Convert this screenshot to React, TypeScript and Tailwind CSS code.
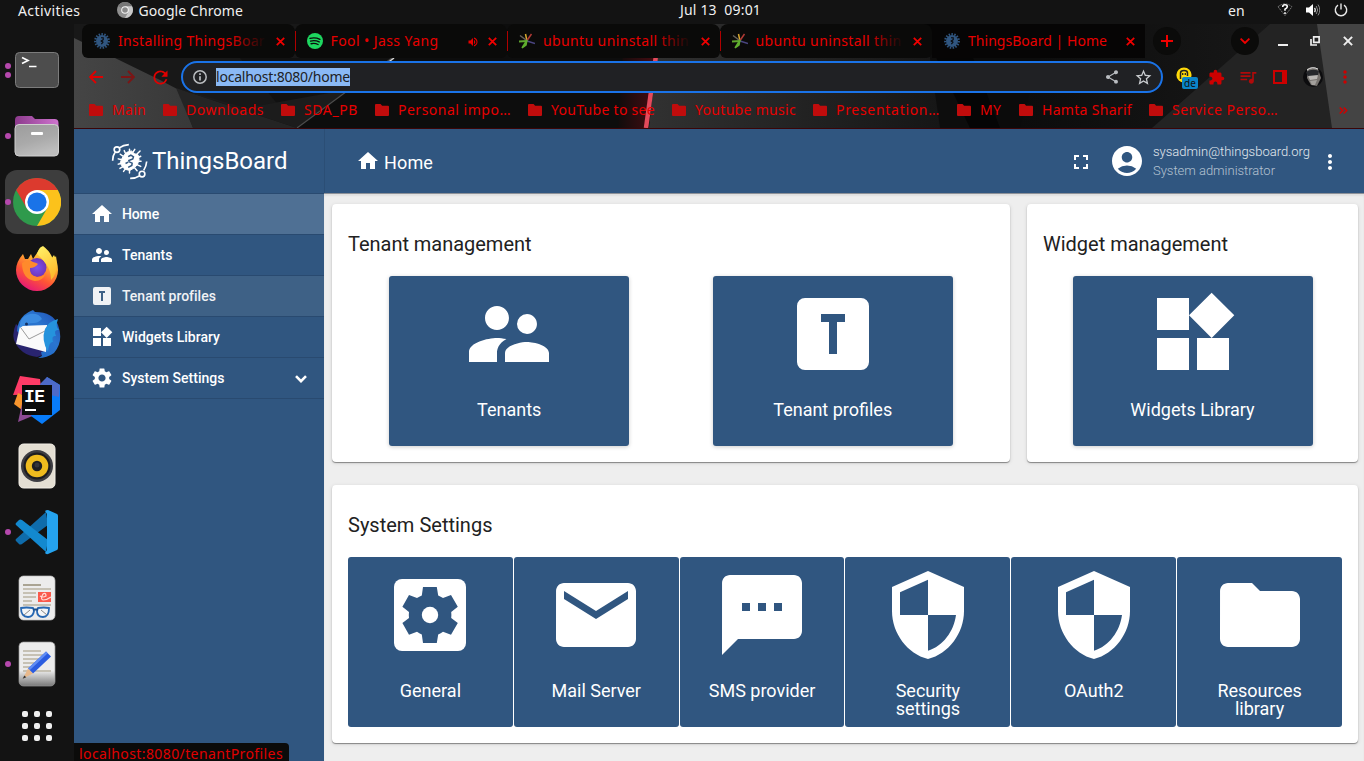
import React, { useLayoutEffect, useRef } from "react";
import {
  MdAccountCircle,
  MdExtension,
  MdFullscreen,
  MdFolder,
  MdHome,
  MdMail,
  MdMoreVert,
  MdQueueMusic,
  MdRefresh,
  MdSecurity,
  MdSettings,
  MdShare,
  MdStarOutline,
  MdSupervisorAccount,
  MdTextsms,
  MdVolumeUp,
  MdWidgets,
} from "react-icons/md";

const PRIMARY = "#305680";

/* Single line of text, tracked so that it fills the given width. */
function FitText({ text, width, className = "" }: { text: string; width: number; className?: string }) {
  const ref = useRef<HTMLSpanElement>(null);
  useLayoutEffect(() => {
    const el = ref.current;
    if (!el) return;
    el.style.letterSpacing = "0px";
    const natural = el.getBoundingClientRect().width;
    el.style.letterSpacing = `${(width - natural) / text.length}px`;
  }, [text, width]);
  return (
    <span ref={ref} className={`inline-block shrink-0 whitespace-pre ${className}`}>
      {text}
    </span>
  );
}

/* ---------- icons ---------- */

const TBoxIcon = ({ className }: { className?: string }) => (
  <svg viewBox="0 0 24 24" className={className} fill="currentColor">
    <path d="M9 7v2h2v8h2V9h2V7H9M5 3h14a2 2 0 0 1 2 2v14a2 2 0 0 1-2 2H5a2 2 0 0 1-2-2V5a2 2 0 0 1 2-2z" />
  </svg>
);

const GeneralIcon = ({ className }: { className?: string }) => (
  <svg viewBox="0 0 24 24" className={className} fill="currentColor">
    <rect x="3" y="3" width="18" height="18" rx="2" />
    <path
      fill={PRIMARY}
      d="M10.25 5h3.45l.35 2.1q.65.25 1.2.65l2-.75 1.7 2.95-1.65 1.3q.1.75 0 1.5L18.95 14l-1.7 2.95-2-.75q-.55.4-1.2.65l-.35 2.15h-3.45l-.3-2.15q-.65-.25-1.2-.65l-2 .75L5.1 14l1.65-1.25q-.1-.75 0-1.5L5.1 9.95 6.75 7l2 .75q.55-.4 1.2-.65z"
    />
    <circle cx="12" cy="12" r="2.05" />
  </svg>
);

const BoardLogo = () => (
  <svg viewBox="112 52 112 112" className="h-[37px] w-[37px] shrink-0" fill="none" stroke="white">
    <path strokeWidth="5" d="M117 106q0-16 7-25M137 67q12-9 29-10M220 108q-1 14-9 27M199 151q-12 8-29 8" />
    <circle cx="130" cy="72" r="8.5" strokeWidth="5" />
    <circle cx="206" cy="146" r="8.5" strokeWidth="5" />
    <g strokeWidth="4.5" strokeLinecap="round">
      <path d="M168 71v8M152 75l4 9M140 86l7 5M134 100l8 2M134 116l9-2M139 129l8-5M150 138l5-7M168 134v9M184 128l7 8M192 118l10 5M195 107h8M194 96l8-4M190 86l10-10M179 79l5-8" />
    </g>
    <path fill="white" strokeWidth="3" strokeLinejoin="round" d="M160 80l14-4 8 8 12 4 3 15-5 14-9 10-14 8-13-3-9-7-7-13 5-13 7-11z" />
    <path stroke={PRIMARY} strokeWidth="4.5" d="M164 93l8-4 8 5-2 6-12 5 1 4 9 4-1 7-11 6M156 114l8-4" />
  </svg>
);

const GearFavicon = () => (
  <svg viewBox="0 0 16 16" className="h-4 w-4 shrink-0">
    <circle cx="8" cy="8" r="6.8" fill="none" stroke="#305680" strokeWidth="2.2" strokeDasharray="1.5 1.34" />
    <circle cx="8" cy="8" r="6" fill="#305680" />
    <path d="M7 4.8h2.2v1.9L7.2 8l1.8 1.2-1.6 2" stroke="#0a0a0a" strokeWidth="1.1" fill="none" />
  </svg>
);

const SpotifyIcon = () => (
  <svg viewBox="0 0 16 16" className="h-4 w-4 shrink-0">
    <circle cx="8" cy="8" r="8" fill="#1ed760" />
    <path d="M3 5.4q5-1.4 10 .9M3.6 8.1q4.4-1.2 8.6.8M4.1 10.7q3.7-.9 7 .8" stroke="#0b0b0b" strokeWidth="1.4" fill="none" strokeLinecap="round" />
  </svg>
);

const BurstIcon = () => (
  <svg viewBox="0 0 16 16" className="h-4 w-4 shrink-0" fill="none" strokeWidth="1.5">
    <path d="M8 8L6.5 1" stroke="#d9a82e" />
    <path d="M8 7.5L12.500 1" stroke="#b03a35" />
    <path d="M8 8l8 2.5" stroke="#4a4580" />
    <path d="M7 7L1 2.5" stroke="#66615a" />
    <path d="M8 8L0 8.5" stroke="#5fa52e" strokeWidth="2" />
    <path d="M8 7l-5 8 4-3z" fill="#6abf33" stroke="#5fae2e" />
  </svg>
);

const CloseX = ({ className = "h-[9px] w-[9px]" }: { className?: string }) => (
  <svg viewBox="0 0 9 9" className={`shrink-0 ${className}`} stroke="currentColor" strokeWidth="1.8" fill="none">
    <path d="M.8.8l7.4 7.4M8.2.8L.8 8.2" />
  </svg>
);

const BookmarkFolder = () => (
  <svg viewBox="0 0 14 12" className="h-3 w-3.5 shrink-0" fill="#c00c0c">
    <path d="M1 0h4.6l1.5 1.700H13a1 1 0 0 1 1 1V11a1 1 0 0 1-1 1H1a1 1 0 0 1-1-1V1a1 1 0 0 1 1-1z" />
  </svg>
);

/* ---------- desktop top bar ---------- */

function TopBar() {
  return (
    <div className="flex h-6 shrink-0 items-start bg-[#131313] text-[14px] leading-[21px] text-[#f0f0f0]">
      <div className="flex w-[680px] pl-[18px]">
        <FitText text="Activities" width={62.5} />
        <svg viewBox="0 0 16 16" className="mt-[2px] mr-[6px] ml-[36px] h-4 w-4">
          <circle cx="8" cy="8" r="8" fill="#8f8f8f" />
          <path d="M8 8L1 4a8 8 0 0 1 14 0z" fill="#777" />
          <path d="M8 4.2h7a8 8 0 0 1-7 11.8l3.400-6z" fill="#c9c9c9" />
          <circle cx="8" cy="8" r="3.8" fill="#f4f4f4" />
          <circle cx="8" cy="8" r="2.8" fill="#8a8a8a" />
        </svg>
        <FitText text="Google Chrome" width={104.5} />
      </div>
      <div className="w-[548px] leading-[20px]">
        <FitText text="Jul 13  09:01" width={81} />
      </div>
      <FitText text="en" width={17} className="leading-[22px]" />
      <svg viewBox="0 0 16 14" className="mt-[3px] ml-[32px] h-[14px] w-4 shrink-0" fill="none">
        <path d="M1 3.800Q8-2 15 3.800L8 12.500z" stroke="#777" strokeDasharray="2 .8" />
        <path d="M5.700 4q0-2.200 2.300-2.200t2.300 2q0 1.200-2.300 2.400v1.600M8 9.200v1.900" stroke="#fff" strokeWidth="1.6" />
      </svg>
      <svg viewBox="0 0 14 14" className="mt-[3px] ml-[13px] h-[14px] w-[14px] shrink-0" fill="none">
        <path d="M0 4.500h3L7 1v12L3 9.500H0z" fill="#fff" />
        <path d="M8.500 4.800q1.600 2.200 0 4.400" stroke="#ddd" strokeWidth="1.3" />
        <path d="M10.200 3q3 4 0 8M12 1.600q3.600 5.400 0 10.800" stroke="#888" />
      </svg>
      <svg viewBox="0 0 14 14" className="mt-[3px] ml-[14px] h-[14px] w-[14px] shrink-0" fill="none" stroke="#e8e8e8" strokeWidth="1.4">
        <path d="M4 2.200a5.700 5.700 0 1 0 6 0M7 .5v6" />
      </svg>
    </div>
  );
}

/* ---------- dock ---------- */

const TerminalApp = () => (
  <svg viewBox="0 0 48 48" className="h-12 w-12">
    <rect x="2.5" y="6.5" width="43" height="35" rx="4" fill="#4d4d4d" stroke="#7c7c7c" />
    <path d="M9 11.500l6 3-6 3" stroke="#fff" strokeWidth="1.7" fill="none" />
    <path d="M16 20.500h7.500" stroke="#fff" strokeWidth="1.5" />
  </svg>
);

const FilesApp = () => (
  <svg viewBox="0 0 48 48" className="h-12 w-12">
    <defs>
      <linearGradient id="files-back" x2="1"><stop stopColor="#8c3a8c" /><stop offset="1" stopColor="#cf74cf" /></linearGradient>
      <linearGradient id="files-front" x2=".4" y2="1"><stop stopColor="#9c9c9c" /><stop offset=".6" stopColor="#aaa" /><stop offset="1" stopColor="#bdbdbd" /></linearGradient>
    </defs>
    <path d="M2 8q0-4 4-4h13l3 3h19.500q4 0 4 4v12H2z" fill="url(#files-back)" />
    <rect x="2" y="12.500" width="43.500" height="31.500" rx="4" fill="url(#files-front)" stroke="#d0d0d0" />
    <rect x="18" y="20" width="12" height="3" rx="1" fill="#fff" />
  </svg>
);

const ChromeApp = () => (
  <svg viewBox="0 0 48 48" className="h-12 w-12">
    <circle cx="24" cy="24" r="24" fill="#2f9a4c" />
    <path d="M3.200 12A24 24 0 0 1 44.800 12H24L13.600 30z" fill="#dc3a2e" />
    <path d="M24 12h20.800A24 24 0 0 1 24 48l10.400-18z" fill="#fcc21b" />
    <circle cx="24" cy="24" r="12" fill="#fff" />
    <circle cx="24" cy="24" r="9.6" fill="#1a73e8" />
  </svg>
);

const FirefoxApp = () => (
  <svg viewBox="0 0 48 48" className="h-12 w-12">
    <defs>
      <linearGradient id="ff-body" x1=".8" y1=".05" x2=".3" y2="1"><stop stopColor="#fff44f" /><stop offset=".35" stopColor="#ffa930" /><stop offset=".65" stopColor="#ff5634" /><stop offset="1" stopColor="#e5157a" /></linearGradient>
      <linearGradient id="ff-tail" x2=".4" y2="1"><stop stopColor="#fff36a" /><stop offset="1" stopColor="#ffbd2e" /></linearGradient>
      <radialGradient id="ff-globe"><stop stopColor="#7a52f0" /><stop offset="1" stopColor="#7136b8" /></radialGradient>
    </defs>
    <path d="M10 10l2 5 3 0 3-5 2 5 8-12q9 6 10 12l3-4q4 8 4 15a21 21 0 0 1-42 0q0-8 7-16z" fill="url(#ff-body)" />
    <circle cx="24" cy="23.500" r="9.500" fill="url(#ff-globe)" />
    <path d="M24 10q2-7 6-8 8 6 10 14l3-4q3 16-5 24 0-10-5-16-3-5-9-10z" fill="url(#ff-tail)" />
    <path d="M9 19q6-5 11-1 4 1 5 2-3 4-8 4-1 7 7 9 6 0 9-4-3 8-11 8-13-2-13-18z" fill="#ff8a2c" />
  </svg>
);

const MailBirdApp = () => (
  <svg viewBox="0 0 48 48" className="h-12 w-12">
    <defs>
      <linearGradient id="tb-bird" x1="0" y1="1" x2="1" y2="0"><stop stopColor="#1b62c4" /><stop offset=".6" stopColor="#2a75cf" /><stop offset="1" stopColor="#1f4bb0" /></linearGradient>
    </defs>
    <path d="M3 14Q-1 22 1 30q6 15 23 17l12-4z" fill="#29246f" />
    <path d="M6 12q5-9 14-12l2 2q18 0 23 13 6 16-4 28-7 5-16 5l4-2-1-4 4-1q-16-6-28-20 0-4 2-9z" fill="url(#tb-bird)" />
    <path d="M7 16l27-1 0 12-1 15L3 34z" fill="#fafafa" />
    <path d="M8 18l8 11 16-8" stroke="#9a9a9a" fill="none" />
    <path d="M7 18q-1-12 10-14 9-1 12 5-4 4-8 4-8 0-14 5z" fill="#3b8be0" />
    <path d="M32 19q4-8 13-10-3 8 1 11-6-1-3 6-5-1-3 6-4-1-5 10-7-12-3-23z" fill="#2593dd" />
    <circle cx="13.500" cy="14" r="1.500" fill="#153060" />
  </svg>
);

const IdeApp = () => (
  <svg viewBox="0 0 48 48" className="h-12 w-12">
    <path d="M7 0l20 3 2 15-29 1z" fill="#fe3b67" />
    <path d="M5 17l-4 11 8 6 3-14z" fill="#f8952d" />
    <path d="M9 28l-4 18 24-10z" fill="#8d4a93" />
    <path d="M34 1l13 8v25l-18 14-11-8z" fill="#087cfa" />
    <path d="M34 1l13 8-1 12-17-4-2-9z" fill="#4d6ac8" />
    <rect x="9" y="9" width="30" height="30" fill="#0b0b0b" />
    <text x="11" y="26" fill="#fff" fontFamily="Liberation Mono, monospace" fontWeight="bold" fontSize="18" textLength="21">IE</text>
    <path d="M12 34h11" stroke="#fff" strokeWidth="2" />
  </svg>
);

const SpeakerApp = () => (
  <svg viewBox="0 0 48 48" className="h-12 w-12">
    <rect x="6" y="2" width="36" height="44" rx="4.500" fill="#e4dfd3" stroke="#f2eee6" />
    <circle cx="24" cy="24" r="16" fill="#3d3d42" />
    <circle cx="24" cy="24" r="13.500" fill="#1d1d20" />
    <circle cx="24" cy="24" r="11.300" fill="#efbb1e" />
    <circle cx="24" cy="24" r="5.200" fill="#1e1e22" />
    <circle cx="24" cy="23" r="2.500" fill="#34343a" />
  </svg>
);

const CodeApp = () => (
  <svg viewBox="0 0 48 48" className="h-12 w-12">
    <path d="M33 4L3 31q-1 1 0 2l3 3q1 1 3 0l26-19z" fill="#0f6cab" />
    <path d="M33 44L3 17q-1-1 0-2l3-3q1-1 3 0l26 20z" fill="#1389cf" />
    <path d="M32 3q1-1 3-1l9 4q1 .5 1 2v32q0 1.500-1 2l-9 4q-2 .5-3-1l2-3V6z" fill="#25a3ef" />
  </svg>
);

const Paper = ({ children }: { children?: React.ReactNode }) => (
  <svg viewBox="0 0 48 48" className="h-12 w-12">
    <defs>
      <linearGradient id="paper-fade" x2="0" y2="1"><stop offset=".65" stopColor="#ececec" /><stop offset="1" stopColor="#787878" /></linearGradient>
    </defs>
    {children}
  </svg>
);

const ReaderApp = () => (
  <Paper>
    <rect x="6" y="2" width="36" height="44" rx="4.500" fill="#ececec" stroke="#bbb" strokeWidth=".7" />
    <path d="M10 11h18" stroke="#aaa493" strokeWidth="2" />
    <path d="M10 15h28M10 19h13M10 23h13M10 27h9M10 31h28" stroke="#c6c1b4" strokeWidth="2" />
    <rect x="25" y="18" width="13" height="10" fill="#fa5a4c" />
    <path d="M27 22q3 2 6 0 0-4-3-2-3 5 0 6 4 0 8-3" stroke="#ffdcd6" strokeWidth="1.2" fill="none" />
    <g fill="#f4f6f8" stroke="#2768b3" strokeWidth="1.800">
      <path d="M8 34q5-1 12 0l1 3q-1 6-6 6-7 0-7-9z" />
      <path d="M25 34q6-1 11 0 0 9-6 9t-6-6z" />
    </g>
    <path d="M11 41l6-5M28 36l6 5" stroke="#888" />
    <path d="M20 35.500h5" stroke="#1d4f8b" strokeWidth="2" />
  </Paper>
);

const EditorApp = () => (
  <Paper>
    <rect x="6" y="2" width="36" height="44" rx="4.500" fill="url(#paper-fade)" stroke="#999" strokeWidth=".7" />
    <path d="M10 11h18M10 15h20M10 19h16M10 23h12M10 27h9M10 31h28" stroke="#c6c1b4" strokeWidth="2" />
    <path d="M33 11.500l5 5-18 17-5-5z" fill="#2a5ce0" />
    <path d="M33 11.500l1.700 1.700-18 17-1.700-1.700z" fill="#5f8df5" />
    <path d="M15 28.500l5 5-10 5z" fill="#e8b98c" />
    <path d="M11.300 35.500l2 1.700-3.600 1.600z" fill="#333" />
  </Paper>
);

const dock: { icon: React.ReactNode; dots: number; active?: boolean }[] = [
  { icon: <TerminalApp />, dots: 2 },
  { icon: <FilesApp />, dots: 1 },
  { icon: <ChromeApp />, dots: 1, active: true },
  { icon: <FirefoxApp />, dots: 0 },
  { icon: <MailBirdApp />, dots: 0 },
  { icon: <IdeApp />, dots: 0 },
  { icon: <SpeakerApp />, dots: 0 },
  { icon: <CodeApp />, dots: 1 },
  { icon: <ReaderApp />, dots: 0 },
  { icon: <EditorApp />, dots: 1 },
];

function Dock() {
  return (
    <div className="flex w-[74px] shrink-0 flex-col bg-[#131313] pt-[13px]">
      {dock.map((d, i) => (
        <div key={i} className="flex h-[66px] shrink-0 items-center pl-[5px]">
          <div className={`flex h-16 w-16 items-center rounded-xl ${d.active ? "bg-[#3d3d3d]" : ""}`}>
            <div className="flex w-2 flex-col items-center gap-[3px] pr-[2px]">
              {Array.from({ length: d.dots }, (_, k) => (
                <span key={k} className="h-[6px] w-[6px] rounded-full bg-[#b548ad]" />
              ))}
            </div>
            {d.icon}
          </div>
        </div>
      ))}
      <div className="flex h-[58px] shrink-0 items-center justify-center">
        <div className="grid grid-cols-3 gap-[6px]">
          {Array.from({ length: 9 }, (_, k) => (
            <span key={k} className="h-[6px] w-[6px] rounded-[2px] bg-[#f0f0f0]" />
          ))}
        </div>
      </div>
    </div>
  );
}

/* ---------- browser chrome ---------- */

function ThemeArt() {
  return (
    <svg viewBox="74 24 1290 104" className="absolute inset-0 h-full w-full" preserveAspectRatio="none">
      <defs>
        <linearGradient id="t-left" x2="1"><stop stopColor="#454545" /><stop offset="1" stopColor="#383838" /></linearGradient>
        <linearGradient id="t-mid" x2="1"><stop stopColor="#313131" /><stop offset=".5" stopColor="#232323" /><stop offset="1" stopColor="#161616" /></linearGradient>
        <linearGradient id="t-glow" x2="1"><stop stopColor="#100c0c" /><stop offset="1" stopColor="#4a0c12" /></linearGradient>
        <linearGradient id="t-right" x2="1"><stop stopColor="#0c0c0c" /><stop offset="1" stopColor="#1c1c1c" /></linearGradient>
      </defs>
      <rect x="74" y="24" width="1290" height="104" fill="#0d0d0d" />
      <path d="M74 24h330l-14 36-93 68H74z" fill="#181818" />
      <path d="M240 58h150l-93 70z" fill="#111" />
      <path d="M74 38l86 42 19 10 14 38H74z" fill="url(#t-left)" />
      <path d="M176 88l121 40H193z" fill="#242424" />
      <path d="M176 88l70 20 100-18 46-32-95 70z" fill="#1c1c1c" />
      <path d="M392 58l-95 70" stroke="#4c4c4c" strokeWidth="1.200" />
      <path d="M394 58l-8 6" stroke="#ddd" strokeWidth="1.500" />
      <path d="M625 24h33l-10 104h-30z" fill="url(#t-glow)" />
      <path d="M660 24h265l15 104H649z" fill="url(#t-mid)" />
      <path d="M657 48l-11 80" stroke="#e44a5c" strokeWidth="4.500" />
      <path d="M925 24h180v104H1000z" fill="#0b0b0b" />
      <path d="M920 24h40l40 104h-30z" fill="#050505" />
      <path d="M1050 24h314v104H1020z" fill="url(#t-right)" />
      <path d="M1270 24h94v104h-212z" fill="#232323" />
      <path d="M1317 24h47v104h-32z" fill="#444" />
    </svg>
  );
}

const tabs = [
  { icon: <GearFavicon />, title: "Installing ThingsBoar", width: 147, fade: true, sep: true },
  { icon: <SpotifyIcon />, title: "Fool • Jass Yang", width: 108, sound: true, sep: true },
  { icon: <BurstIcon />, title: "ubuntu uninstall thin", width: 146, fade: true, sep: true },
  { icon: <BurstIcon />, title: "ubuntu uninstall thin", width: 146, fade: true },
  { icon: <GearFavicon />, title: "ThingsBoard | Home", width: 139, active: true },
];

function TabStrip() {
  return (
    <div className="flex h-[34px] items-center pl-2">
      {tabs.map((t, i) => (
        <div
          key={i}
          className={`flex h-[34px] w-[212.5px] shrink-0 items-center pl-3 ${
            t.active ? "bg-[#060505]" : "rounded-t-lg rounded-b-md bg-[#0a0a09]"
          }`}
        >
          {t.icon}
          <div className="relative mt-[-2px] ml-2 w-[148px] shrink-0 overflow-hidden text-[14px] text-[#e80000]">
            <FitText text={t.title} width={t.width} />
            {t.fade && <span className="absolute inset-y-0 right-0 w-9 bg-linear-to-r from-transparent to-[#0a0a09]" />}
            {t.sound && <MdVolumeUp className="absolute top-[6px] right-0 h-3 w-3" />}
          </div>
          <CloseX className="ml-[9.5px] h-[9px] w-[9px] text-[#f00000]" />
          {t.sep && <span className="relative z-10 ml-[10px] h-5 w-px shrink-0 bg-[#b00000]" />}
        </div>
      ))}
      <span className="ml-[8.5px] flex h-7 w-7 items-center justify-center rounded-full bg-[#0b0b0a]">
        <svg viewBox="0 0 12 12" className="h-3 w-3" stroke="#f00000" strokeWidth="2">
          <path d="M6 0v12M0 6h12" />
        </svg>
      </span>
      <span className="ml-[50px] flex h-7 w-7 items-center justify-center rounded-full bg-[#0b0b0a]">
        <svg viewBox="0 0 10 6" className="h-[6px] w-[10px]" stroke="#f00000" strokeWidth="1.800" fill="none">
          <path d="M.6.6L5 5 9.400.6" />
        </svg>
      </span>
      <span className="mt-[7px] ml-[19px] h-[2px] w-[10px] bg-[#eee]" />
      <svg viewBox="0 0 10 10" className="ml-[22px] h-[10px] w-[10px]" stroke="#eee" strokeWidth="1.700" fill="none">
        <path d="M3.700.9h5.400v5.400H3.700zM1 3v6h6" />
      </svg>
      <CloseX className="ml-[23px] h-[10px] w-[10px] text-[#eee]" />
    </div>
  );
}

function AddressBar() {
  return (
    <div className="flex h-[38px] items-center pl-[15px]">
      <svg viewBox="0 0 14 14" className="h-[14px] w-[14px]" stroke="#e00000" strokeWidth="1.800" fill="none">
        <path d="M14 7H1.200M7 1L1 7l6 6" />
      </svg>
      <svg viewBox="0 0 14 14" className="ml-[18px] h-[14px] w-[14px]" stroke="#7c1515" strokeWidth="1.800" fill="none">
        <path d="M0 7h12.800M7 1l6 6-6 6" />
      </svg>
      <MdRefresh className="ml-[15px] h-[21px] w-[21px] text-[#e00000]" />
      <div className="ml-[10px] flex h-8 w-[982px] shrink-0 items-center rounded-full border-2 border-[#1a73e8] bg-[#202124] pl-[10px]">
        <svg viewBox="0 0 14 14" className="h-[14px] w-[14px]" fill="none" stroke="#b9bcc0" strokeWidth="1.500">
          <circle cx="7" cy="7" r="6.200" />
          <path d="M7 6.200v4.300M7 3.300v1.600" strokeWidth="1.700" />
        </svg>
        <div className="ml-[9px] h-[18px] bg-[#8ab9f5] text-[14px] leading-[17px] text-[#202124]">
          <FitText text="localhost:8080/home" width={134} />
        </div>
        <MdShare className="ml-[754px] h-4 w-4 text-[#b9bcc0]" />
        <MdStarOutline className="ml-[14px] h-[19px] w-[19px] text-[#c9cccf]" />
      </div>
      <div className="relative ml-[13px] h-5 w-[22px] shrink-0">
        <svg viewBox="0 0 16 16" className="h-4 w-4">
          <circle cx="8" cy="8" r="7.600" fill="#ffd90a" />
          <path d="M4.500 12V6q0-2.500 3.500-2.500T11.500 6v3" fill="none" stroke="#222" strokeWidth="1.500" />
          <path d="M6.700 6v2M9.300 6v2" stroke="#222" strokeWidth="1.300" />
        </svg>
        <span className="absolute top-[10px] left-[6px] flex h-3 w-4 items-center justify-center rounded-[2px] bg-[#0a84c8] text-[10px] leading-3 text-[#101010]">
          de
        </span>
      </div>
      <MdExtension className="ml-[10px] h-[17px] w-[17px] text-[#cc0000]" />
      <MdQueueMusic className="ml-[13px] h-[20px] w-[20px] text-[#b00a0a]" />
      <span className="ml-[15px] h-[14px] w-[14px] border-2 border-r-[5px] border-[#cc0000]" />
      <svg viewBox="0 0 20 22" className="ml-[16px] h-[22px] w-[20px]">
        <circle cx="10" cy="11" r="10" fill="#0c0c0e" />
        <path d="M4 3q6-4 11 0l3 9-4 8-6-1-4-7z" fill="#77736f" />
        <path d="M3 6q6-4 13-1l-1 5-10 1z" fill="#26282c" />
        <path d="M5 10l10-1-1 4-7 1z" fill="#b9b7b4" />
        <path d="M7 15l7-1-2 5-3 0z" fill="#a3a09c" />
        <path d="M4 4q5-4 11-1" stroke="#ddd" fill="none" />
      </svg>
      <MdMoreVert className="ml-[12px] h-[20px] w-[20px] text-[#cc0000]" />
    </div>
  );
}

const bookmarks: [string, number, number][] = [
  ["Main", 34, 74],
  ["Downloads", 78, 118],
  ["SDA_PB", 54, 94],
  ["Personal impo…", 113, 153],
  ["YouTube to see", 104, 144],
  ["Youtube music", 101, 141],
  ["Presentation…", 104, 144],
  ["MY", 21, 62],
  ["Hamta Sharif", 90, 130],
  ["Service Perso…", 106, 190],
];

function Bookmarks() {
  return (
    <div className="flex h-[28px] items-center pl-[15px] text-[14px] text-[#e80000]">
      {bookmarks.map(([name, width, slot]) => (
        <div key={name} className="flex shrink-0 items-center gap-[9px]" style={{ width: slot }}>
          <BookmarkFolder />
          <FitText text={name} width={width} className="mt-[-2px]" />
        </div>
      ))}
      <svg viewBox="0 0 9 7" className="h-[7px] w-[9px]" fill="none" stroke="#d00000" strokeWidth="1.500">
        <path d="M.7.5l3 3-3 3M4.700.5l3 3-3 3" />
      </svg>
    </div>
  );
}

/* ---------- page ---------- */

const nav = [
  { label: "Home", width: 37, Icon: MdHome, tone: "bg-[#4f7094] text-white" },
  { label: "Tenants", width: 50.5, Icon: MdSupervisorAccount, tone: "text-white" },
  { label: "Tenant profiles", width: 93.5, Icon: TBoxIcon, tone: "bg-[#3e6186] text-[#f0f2f5]" },
  { label: "Widgets Library", width: 98, Icon: MdWidgets, tone: "text-white" },
  { label: "System Settings", width: 102.5, Icon: MdSettings, tone: "text-white", expandable: true },
];

function Sidebar() {
  return (
    <div className="flex w-[250px] shrink-0 flex-col bg-[#305680] font-['Roboto',sans-serif]">
      <div className="flex h-[65px] items-center border-b border-[#294a70] pl-[37px]">
        <BoardLogo />
        <FitText text="ThingsBoard" width={135.5} className="ml-[4px] text-[24px] leading-8 text-white" />
      </div>
      {nav.map(({ label, width, Icon, tone, expandable }) => (
        <div key={label} className={`flex h-[41px] items-center border-b border-[#294a70] pl-4 text-[14px] font-medium ${tone}`}>
          <Icon className="mr-2 h-6 w-6 shrink-0" />
          <FitText text={label} width={width} />
          {expandable && (
            <svg viewBox="0 0 12 8" className="mt-[2px] mr-[17px] ml-auto h-2 w-3" fill="none" stroke="white" strokeWidth="2.600">
              <path d="M1 1.200l5 5 5-5" />
            </svg>
          )}
        </div>
      ))}
    </div>
  );
}

function Header() {
  return (
    <div className="flex h-16 shrink-0 items-center border-l border-[#2b4e75] bg-[#305680] text-white">
      <MdHome className="mt-[-1px] ml-[31px] h-6 w-6" />
      <FitText text="Home" width={49} className="mt-1 ml-1 text-[18px] leading-6" />
      <MdFullscreen className="mt-[2px] ml-auto h-6 w-6" />
      <MdAccountCircle className="ml-[16px] h-9 w-9" />
      <div className="ml-2 flex w-[157px] flex-col text-[13px] leading-[19px] font-light">
        <FitText text="sysadmin@thingsboard.org" width={157} className="self-start text-[#e3e9ef]" />
        <FitText text="System administrator" width={122} className="self-start text-[#b4c2d1]" />
      </div>
      <MdMoreVert className="mt-[2px] mr-[22px] ml-2 h-6 w-6" />
    </div>
  );
}

type IconType = React.ComponentType<{ className?: string }>;

function Tile({ Icon, label, className = "" }: { Icon: IconType; label: string; className?: string }) {
  return (
    <div className={`flex h-[170px] flex-col items-center rounded-[3px] bg-[#305680] pt-[10px] text-white ${className}`}>
      <Icon className="h-24 w-24 shrink-0" />
      <div className="mt-[19px] text-center text-[18px] leading-[18px] whitespace-pre-line">{label}</div>
    </div>
  );
}

function Card({ title, titleWidth, className = "", children }: { title: string; titleWidth: number; className?: string; children: React.ReactNode }) {
  return (
    <div className={`h-[258px] shrink-0 rounded-[4px] bg-white px-4 pt-[28px] shadow-[0_1px_1px_rgba(0,0,0,0.4),0_1px_4px_rgba(0,0,0,0.12)] ${className}`}>
      <div className="mb-5 h-6 text-[20px] leading-6 text-[#212121]">
        <FitText text={title} width={titleWidth} />
      </div>
      {children}
    </div>
  );
}

const settings: { Icon: IconType; label: string }[] = [
  { Icon: GeneralIcon, label: "General" },
  { Icon: MdMail, label: "Mail Server" },
  { Icon: MdTextsms, label: "SMS provider" },
  { Icon: MdSecurity, label: "Security\nsettings" },
  { Icon: MdSecurity, label: "OAuth2" },
  { Icon: MdFolder, label: "Resources\nlibrary" },
];

const WIDE_TILE = "w-60 shadow-[0_1px_4px_rgba(0,0,0,0.2)]";

function Dashboard() {
  return (
    <div className="flex min-w-0 flex-1 flex-col bg-[#eeeeee] font-['Roboto',sans-serif]">
      <Header />
      <div className="flex flex-1 flex-col gap-[23px] border-t border-[#8d9198] pt-[10px] pl-2 shadow-[inset_0_2px_2px_rgba(0,0,0,0.06)]">
        <div className="flex gap-[17px]">
          <Card title="Tenant management" titleWidth={183.5} className="w-[678px]">
            <div className="grid grid-cols-2 justify-items-center gap-px">
              <Tile Icon={MdSupervisorAccount} label="Tenants" className={WIDE_TILE} />
              <Tile Icon={TBoxIcon} label="Tenant profiles" className={WIDE_TILE} />
            </div>
          </Card>
          <Card title="Widget management" titleWidth={185} className="w-[331px]">
            <div className="flex justify-center">
              <Tile Icon={MdWidgets} label="Widgets Library" className={WIDE_TILE} />
            </div>
          </Card>
        </div>
        <Card title="System Settings" titleWidth={144.5} className="w-[1026px]">
          <div className="grid grid-cols-6 gap-px">
            {settings.map((s, i) => (
              <Tile key={i} {...s} />
            ))}
          </div>
        </Card>
      </div>
    </div>
  );
}

export default function App() {
  return (
    <div className="flex h-[761px] w-[1364px] flex-col overflow-hidden bg-[#131313] font-['Noto_Sans',sans-serif]">
      <TopBar />
      <div className="flex min-h-0 flex-1">
        <Dock />
        <div className="relative flex min-w-0 flex-1 flex-col">
          <div className="relative h-[105px] shrink-0 overflow-hidden border-b border-[#3a0508]">
            <ThemeArt />
            <div className="relative">
              <TabStrip />
              <AddressBar />
              <Bookmarks />
            </div>
          </div>
          <div className="flex min-h-0 flex-1">
            <Sidebar />
            <Dashboard />
          </div>
          <div className="absolute bottom-0 left-0 h-[18px] w-[215px] rounded-tr bg-[#0b0b0a] pl-[5px] text-[14px] leading-[21px] text-[#e00000]">
            <FitText text="localhost:8080/tenantProfiles" width={204} />
          </div>
        </div>
      </div>
    </div>
  );
}
